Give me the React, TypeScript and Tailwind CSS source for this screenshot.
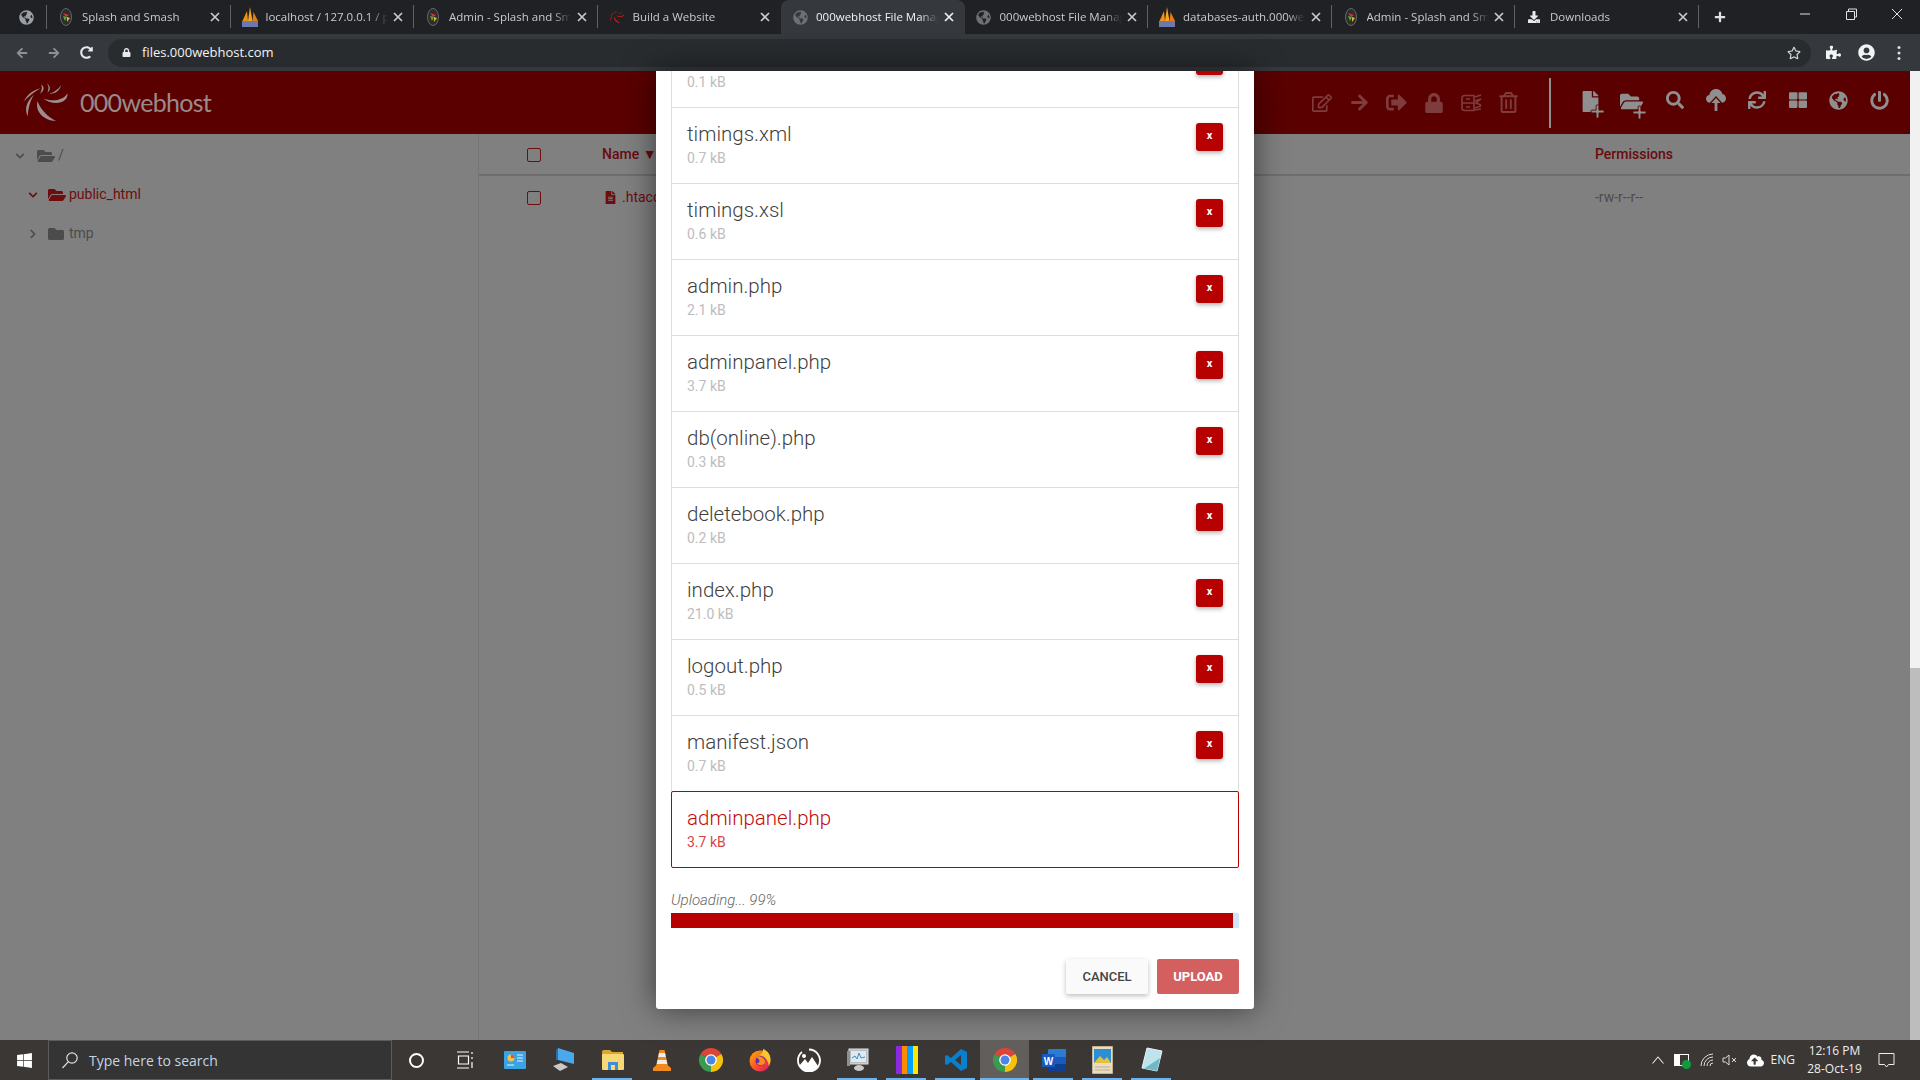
import React from "react";
import {
  FaRegEdit, FaArrowRight, FaSignOutAlt, FaLock, FaRegTrashAlt, FaSearch, FaCloudUploadAlt, FaSync, FaThLarge,
  FaGlobeAmericas, FaPowerOff, FaChevronDown, FaChevronRight, FaFolderOpen, FaFolder, FaFile, FaFileAlt, FaPlus,
  FaPuzzlePiece, FaUserCircle, FaRegStar, FaLock as FaLockSmall, FaArrowLeft, FaRedoAlt, FaDownload, FaWindows,
} from "react-icons/fa";

function Chrome({ s = 24 }: { s?: number }) {
  return (
    <svg width={s} height={s} viewBox="0 0 24 24">
      <path d="M12 12 L1.6 6 A12 12 0 0 1 22.4 6 Z" fill="#db4437" />
      <path d="M12 12 L22.4 6 A12 12 0 0 1 12 24 Z" fill="#f4c20d" />
      <path d="M12 12 L12 24 A12 12 0 0 1 1.6 6 Z" fill="#3c9a4e" />
      <circle cx="12" cy="12" r="5.8" fill="#fff" />
      <circle cx="12" cy="12" r="4.5" fill="#4a86e8" />
    </svg>
  );
}

function Swirl({ w, h, fill }: { w: number; h: number; fill: string }) {
  return (
    <svg width={w} height={h} viewBox="60 35 155 130" fill={fill}>
      <path d="M207 70 C210 100 165 115 128 86 C155 98 192 95 207 70Z" />
      <path d="M110 96 C102 130 130 158 170 160 C142 145 122 125 110 96Z" />
      <path d="M98 75 C74 98 68 120 78 145 C80 120 85 98 98 75Z" />
      <path d="M66 96 C76 75 98 58 120 54 C100 66 84 78 66 96Z" />
      <path d="M122 42 C134 50 132 62 118 72 C124 60 126 52 122 42Z" />
      <path d="M140 38 C154 48 152 62 142 68 C146 58 148 48 140 38Z" />
      <path d="M186 44 C182 62 166 72 148 72 C164 66 176 58 186 44Z" />
    </svg>
  );
}

function SplashIcon() {
  return (
    <svg width="12" height="18" viewBox="0 0 12 18">
      <ellipse cx="6" cy="9" rx="5.5" ry="8.5" fill="#2d2d2d" stroke="#777" strokeWidth="0.8" />
      <path d="M3 5 L9 7 L6 9Z" fill="#d33" />
      <path d="M3 8 L7 9 L5 13Z" fill="#5a3" />
      <path d="M7 9 L10 10 L7 14Z" fill="#db3" />
    </svg>
  );
}

function PmaIcon() {
  return (
    <svg width="18" height="20" viewBox="0 0 18 20" className="shrink-0">
      <path d="M1.5 14 L6 4 L7 14Z" fill="#f29111" />
      <path d="M7 14 L9 0 L11.5 14Z" fill="#f6a623" />
      <path d="M11.5 14 L12.5 5 L17 14Z" fill="#e77a10" />
      <rect x="1" y="14" width="16" height="6" fill="#6c78af" />
    </svg>
  );
}

function Globe({ c = "#9aa0a6" }: { c?: string }) {
  return <FaGlobeAmericas size={15} color={c} />;
}

const tabs: { t: string; i: React.ReactNode; active?: boolean; sep?: boolean }[] = [
  { t: "Splash and Smash", i: <SplashIcon />, sep: true },
  { t: "localhost / 127.0.0.1 / phpMyAdmin", i: <PmaIcon />, sep: true },
  { t: "Admin - Splash and Smash", i: <SplashIcon />, sep: true },
  { t: "Build a Website", i: <Swirl w={16} h={14} fill="#c71a1a" /> },
  { t: "000webhost File Manager", i: <Globe c="#6d7175" />, active: true },
  { t: "000webhost File Manager", i: <Globe c="#6d7175" />, sep: true },
  { t: "databases-auth.000webhost.com", i: <PmaIcon />, sep: true },
  { t: "Admin - Splash and Smash", i: <SplashIcon />, sep: true },
  { t: "Downloads", i: <FaDownload size={12} color="#e8eaed" />, sep: true },
];

function TabStrip() {
  return (
    <div className="h-[34px] bg-[#202124] flex items-stretch font-['Open_Sans'] text-[11.5px] shrink-0">
      <div className="w-[47px] flex items-center justify-end pr-[12px] border-r border-r-[#5f6368] my-[5px]">
        <Globe />
      </div>
      {tabs.map((tab, i) => (
        <div
          key={i}
          className={
            tab.active
              ? "w-[183.5px] flex items-center pl-[11px] pr-[11px] bg-[#35383c] rounded-t-lg text-[#f1f3f4]"
              : "w-[183.5px] flex items-center pl-[11px] pr-[11px] text-[#c8cbce] relative"
          }
        >
          <span className="w-[16px] h-[18px] flex items-center justify-center shrink-0">{tab.i}</span>
          <span className="w-[122px] ml-[8px] overflow-hidden whitespace-nowrap [mask-image:linear-gradient(to_right,black_85%,transparent)]">
            {tab.t}
          </span>
          <svg width="10" height="10" viewBox="0 0 10 10" className="ml-auto shrink-0" stroke={tab.active ? "#f1f3f4" : "#c8cbce"} strokeWidth="1.7">
            <path d="M1 1 L9 9 M9 1 L1 9" />
          </svg>
          {tab.sep && <span className="absolute right-0 top-[5px] h-[23px] w-px bg-[#5f6368]" />}
        </div>
      ))}
      <div className="ml-[15px] flex items-center">
        <FaPlus size={12} color="#dfe1e5" />
      </div>
      <div className="ml-auto flex items-start pt-[8px] text-[#e8eaed]">
        <svg width="46" height="12" viewBox="0 0 46 12" stroke="#dfe1e5" fill="none"><path d="M18 6 H28" /></svg>
        <svg width="46" height="12" viewBox="0 0 46 12" stroke="#dfe1e5" fill="none"><path d="M18.5 3.5 H26.5 V11.5 H18.5Z M20.5 3.5 V1 H28.5 V9 H26.5" /></svg>
        <svg width="46" height="12" viewBox="0 0 46 12" stroke="#dfe1e5" fill="none"><path d="M18 1 L28 11 M28 1 L18 11" /></svg>
      </div>
    </div>
  );
}

function Toolbar() {
  return (
    <div className="h-[37px] bg-[#35383c] flex items-center shrink-0">
      <div className="w-[108px] flex items-center pl-[16px] gap-[20px]">
        <FaArrowLeft size={12} color="#8d9195" />
        <FaArrowRight size={12} color="#8d9195" />
        <FaRedoAlt size={13} color="#e8eaed" />
      </div>
      <div className="h-[28px] w-[1703px] rounded-full bg-[#292c2f] flex items-center pl-[14px] pr-[10px]">
        <FaLockSmall size={9} color="#e8eaed" />
        <span className="ml-[11px] font-['Open_Sans'] text-[13px] text-[#f1f3f4]">files.000webhost.com</span>
        <FaRegStar size={14} color="#d5d7da" className="ml-auto" />
      </div>
      <div className="flex items-center ml-[15px] gap-[17px]">
        <FaPuzzlePiece size={15} color="#f1f3f4" />
        <FaUserCircle size={17} color="#f1f3f4" />
        <svg width="4" height="16" viewBox="0 0 4 16" fill="#dfe1e5" className="ml-[5px]">
          <circle cx="2" cy="2.5" r="1.5" /><circle cx="2" cy="8" r="1.5" /><circle cx="2" cy="13.5" r="1.5" />
        </svg>
      </div>
    </div>
  );
}

function Plus({ children }: { children: React.ReactNode }) {
  return (
    <span className="relative block">
      {children}
      <FaPlus size={15} color="#8f8f8f" className="absolute -right-[4px] -bottom-[7px] stroke-[#5a0000] stroke-[30px]" />
    </span>
  );
}

function ArchiveIcon() {
  return (
    <svg width="21" height="18" viewBox="0 0 21 18" fill="none" stroke="#7f3c3c" strokeWidth="1.6">
      <path d="M4 1.5 H13 L13 16.5 H4 C2 16.5 1 15.5 1 14 V4 C1 2.5 2 1.5 4 1.5Z" />
      <path d="M1 9 H13 M5 5 H9 M5 13 H9" />
      <path d="M14 3 L20 1 M14 7 L20 5 L15 9 L20 11 M14 14 L20 12 M14 16 L20 15" />
    </svg>
  );
}

function CloudUp() {
  return (
    <svg width="20" height="24" viewBox="0 0 20 24">
      <path d="M4.5 15 C1.5 15 0 13 0 10.8 C0 8.6 1.6 7.2 3.4 7 C3.8 3.4 6.6 1 10 1 C13.4 1 15.8 3.2 16.4 6 C18.6 6.4 20 8.2 20 10.6 C20 13 18.2 15 15.5 15Z" fill="#8f8f8f" />
      <path d="M10 9 L16 15.5 H12 V23.5 H8 V15.5 H4Z" fill="#8f8f8f" stroke="#5a0000" strokeWidth="1.2" />
    </svg>
  );
}

function Header() {
  const dim = "#7f3c3c";
  const lit = "#8f8f8f";
  return (
    <header className="h-[63px] bg-[#5a0000] flex items-center shrink-0">
      <div className="pl-[22px] flex items-center">
        <Swirl w={48} h={41} fill="#9c8e8e" />
        <span className="ml-[10px] font-['Lato'] text-[25px] tracking-[-0.7px] text-[#9a8a8a] leading-none">000webhost</span>
      </div>
      <div className="ml-auto flex items-center pr-[10px]">
        {[
          <FaRegEdit size={20} color={dim} />,
          <FaArrowRight size={19} color={dim} />,
          <FaSignOutAlt size={21} color={dim} />,
          <FaLock size={20} color={dim} />,
          <ArchiveIcon />,
          <FaRegTrashAlt size={21} color={dim} />,
        ].map((ic, i) => (
          <span key={i} className="w-[37.2px] flex justify-center">{ic}</span>
        ))}
        <span className="w-[2px] h-[50px] bg-[#8f8f8f] ml-[22px] mr-[21px]" />
        <span className="w-[41px] flex justify-center -mt-[3px] pr-[5px]"><Plus><FaFile size={21} color={lit} /></Plus></span>
        <span className="w-[41px] flex justify-center -mt-[3px] pr-[4px]"><Plus><FaFolderOpen size={23} color={lit} /></Plus></span>
        {[
          <FaSearch size={18} color={lit} />,
          <CloudUp />,
          <FaSync size={18} color={lit} />,
          <FaThLarge size={18} color={lit} />,
          <FaGlobeAmericas size={19} color={lit} />,
          <FaPowerOff size={19} color={lit} />,
        ].map((ic, i) => (
          <span key={i} className="w-[41px] flex justify-center -mt-[5px]">{ic}</span>
        ))}
      </div>
    </header>
  );
}

function Sidebar() {
  return (
    <aside className="w-[479px] border-r border-r-[#767676] pt-[2px] font-[Roboto] text-[14px] shrink-0">
      <div className="h-[39px] flex items-center pl-[15px] text-[#4c4c4c]">
        <FaChevronDown size={10} />
        <FaFolderOpen size={18} className="ml-[12px]" />
        <span className="ml-[3px]">/</span>
      </div>
      <div className="h-[39px] flex items-center pl-[28px] text-[#6f0d0d]">
        <FaChevronDown size={10} />
        <FaFolderOpen size={18} className="ml-[10px]" />
        <span className="ml-[3px]">public_html</span>
      </div>
      <div className="h-[39px] flex items-center pl-[28px] text-[#4c4c4c]">
        <FaChevronRight size={10} />
        <FaFolder size={16} className="ml-[10px]" />
        <span className="ml-[5px]">tmp</span>
      </div>
    </aside>
  );
}

function Check() {
  return <span className="block w-[14px] h-[14px] border border-[#6f0d0d] rounded-[2px]" />;
}

function Table() {
  return (
    <div className="flex-1 font-[Roboto] text-[14px]">
      <div className="h-[42px] border-b-2 border-b-[#6e6e6e] flex items-center text-[#670c0c] font-medium">
        <span className="w-[123px] pl-[48px] pt-[2px]"><Check /></span>
        <span>Name ▼</span>
        <span className="ml-auto w-[315px]">Permissions</span>
      </div>
      <div className="h-[42px] flex items-center text-[#6f0d0d]">
        <span className="w-[125px] pl-[48px] pt-[2px]"><Check /></span>
        <FaFileAlt size={13} />
        <span className="ml-[5px]">.htaccess</span>
        <span className="ml-auto w-[315px] text-[#4c4c4c] text-[14px]">-rw-r--r--</span>
      </div>
    </div>
  );
}

const files = [
  ["test.php", "0.1 kB"],
  ["timings.xml", "0.7 kB"],
  ["timings.xsl", "0.6 kB"],
  ["admin.php", "2.1 kB"],
  ["adminpanel.php", "3.7 kB"],
  ["db(online).php", "0.3 kB"],
  ["deletebook.php", "0.2 kB"],
  ["index.php", "21.0 kB"],
  ["logout.php", "0.5 kB"],
  ["manifest.json", "0.7 kB"],
];

function Modal() {
  return (
    <div className="absolute inset-0 flex justify-center items-start pointer-events-none">
      <div className="w-[598px] h-[938px] bg-white rounded-b-[3px] shadow-[0_0_32px_rgba(0,0,0,0.55)] flex flex-col justify-end overflow-hidden px-[15px] pb-[15px] font-[Roboto]">
        {files.map(([n, s]) => (
          <div key={n + s} className="h-[77px] shrink-0 -mt-px border border-[#dedede] flex justify-between pl-[15px] pr-[15px] pt-[15px]">
            <div className="-mt-px">
              <div className="text-[20.5px] leading-[24px] font-light text-[#3f3f3f]">{n}</div>
              <div className="text-[14px] leading-[18px] mt-[3px] text-[#bdbdbd]">{s}</div>
            </div>
            <span className="w-[27px] h-[28px] bg-[#b70000] rounded-[3px] shadow-[0_2px_4px_rgba(0,0,0,0.3)] text-white text-[11px] font-bold flex items-center justify-center pb-[2px]">x</span>
          </div>
        ))}
        <div className="h-[77px] shrink-0 -mt-px border border-[#b70000] rounded-[2px] pl-[15px] pt-[14px] z-10 bg-white">
          <div className="text-[20.5px] leading-[24px] font-light text-[#c00d0d]">adminpanel.php</div>
          <div className="text-[14px] leading-[18px] mt-[3px] text-[#d8434a]">3.7 kB</div>
        </div>
        <div className="mt-[22px] h-[20px] text-[15px] italic leading-[20px] text-[#666] font-light">Uploading... 99%</div>
        <div className="mt-[3px] h-[15px] bg-[#cfe5f8] shrink-0">
          <div className="h-full w-[99%] bg-[#b70000]" />
        </div>
        <div className="mt-[31px] flex justify-end gap-[9px] text-[13px] font-medium">
          <span className="w-[82px] h-[35px] rounded-[2px] bg-[#fafafa] text-[#444] shadow-[0_2px_5px_rgba(0,0,0,0.26)] flex items-center justify-center">CANCEL</span>
          <span className="w-[82px] h-[35px] rounded-[2px] bg-[#d35f5f] text-white font-bold flex items-center justify-center">UPLOAD</span>
        </div>
      </div>
    </div>
  );
}

function Scrollbar() {
  return (
    <div className="w-[10px] bg-[#bdbdbd] shrink-0">
      <div className="h-[597px] bg-[#f1f1f1]" />
    </div>
  );
}

function TaskBtn({ u, a, children }: { u?: boolean; a?: boolean; children: React.ReactNode }) {
  return (
    <span className={a ? "relative w-[49px] h-full flex items-center justify-center bg-[#625e5b]" : "relative w-[49px] h-full flex items-center justify-center"}>
      {children}
      {u && <span className={a ? "absolute bottom-0 left-0 right-0 h-[2px] bg-[#6cb4ee]" : "absolute bottom-0 left-[4px] right-[5px] h-[2px] bg-[#6cb4ee]"} />}
    </span>
  );
}

function Taskbar() {
  return (
    <div className="h-[40px] bg-[#3a3735] flex items-stretch shrink-0 font-['Open_Sans']">
      <span className="w-[48px] flex items-center justify-center"><FaWindows size={17} color="#fff" /></span>
      <div className="w-[344px] bg-[#343434] border border-[#5c5c5c] flex items-center pl-[12px]">
        <svg width="18" height="18" viewBox="0 0 18 18" fill="none" stroke="#e0e0e0" strokeWidth="1.2"><circle cx="11" cy="7" r="5.2" /><path d="M7.2 10.8 L1.5 17" /></svg>
        <span className="ml-[10px] text-[14px] text-[#c5d4e3]">Type here to search</span>
      </div>
      <TaskBtn><span className="block w-[15px] h-[15px] rounded-full border-2 border-white" /></TaskBtn>
      <TaskBtn>
        <svg width="18" height="18" viewBox="0 0 18 18" fill="none" stroke="#fff" strokeWidth="1.2" className="-ml-[2px]"><path d="M1 1 H13 M1 17 H13 M2.5 5 H12.5 V13 H2.5Z M16 1 V3 M16 6 V8 M16 11 V17" /></svg>
      </TaskBtn>
      <TaskBtn>
        <svg width="22" height="18" viewBox="0 0 22 18"><rect width="22" height="18" rx="1" fill="#3aa3e3" /><circle cx="7" cy="7" r="3.5" fill="#f5c04a" /><path d="M7 7 V3.5 A3.5 3.5 0 0 1 10.5 7Z" fill="#e2562b" /><path d="M13 4 H19 M13 7 H19 M13 10 H19 M3 14 H10" stroke="#e6f5ff" strokeWidth="1.2" /></svg>
      </TaskBtn>
      <TaskBtn>
        <svg width="24" height="26" viewBox="0 0 24 26"><path d="M6 1 L22 6 V17 L6 13Z" fill="#4aa9ea" /><path d="M6 1 L4 3 V13 L6 13Z" fill="#2f6da3" /><path d="M1 19 L9 16 L16 20 L8 24Z" fill="#c9c9c9" /></svg>
      </TaskBtn>
      <TaskBtn u>
        <svg width="22" height="20" viewBox="0 0 22 20"><path d="M0 2 Q0 0 2 0 H8 L10 2 H21 V5 H0Z" fill="#d9a62e" /><rect y="4" width="22" height="16" rx="1" fill="#f8d775" /><path d="M6 20 V12 H16 V20 H13 V15 H9 V20Z" fill="#3c8fd6" /></svg>
      </TaskBtn>
      <TaskBtn>
        <svg width="20" height="23" viewBox="0 0 20 23"><path d="M7.5 1 H12.5 L16 17 H4Z" fill="#f48a1f" /><path d="M7 4 H13 L13.8 8 H6.2Z" fill="#eee" /><path d="M5.6 11 H14.4 L15.2 15 H4.8Z" fill="#eee" /><path d="M1 19 L4 16.5 H16 L19 19 V22 H1Z" fill="#f08a1c" /></svg>
      </TaskBtn>
      <TaskBtn><Chrome /></TaskBtn>
      <TaskBtn>
        <svg width="24" height="24" viewBox="0 0 24 24"><defs><linearGradient id="ff" x1="0" y1="0" x2="1" y2="1"><stop offset="0" stopColor="#ffb000" /><stop offset="0.55" stopColor="#ff4f2a" /><stop offset="1" stopColor="#c5127e" /></linearGradient></defs><circle cx="12" cy="13" r="10.5" fill="url(#ff)" /><circle cx="12.5" cy="13" r="5" fill="#5a2bb5" /><path d="M15 1 C23 4 24 12 21 18 C20 12 17 8 11 7 C14 6 15 4 15 1Z" fill="#ffc42e" /><path d="M8 9 C12 7 18 10 17 15 C15 18 10 18 9 15 C12 15 13 12 8 9Z" fill="#ff8a1e" /></svg>
      </TaskBtn>
      <TaskBtn>
        <svg width="24" height="24" viewBox="0 0 24 24" fill="#fff"><path d="M12 1.5 A11 11 0 1 1 5 4" fill="none" stroke="#fff" strokeWidth="1.8" /><path d="M2 18 L8 11 L11 15 L15 9 L21 18 A11 11 0 0 1 2 18Z" /><circle cx="7" cy="8" r="2" /></svg>
      </TaskBtn>
      <TaskBtn u>
        <svg width="24" height="26" viewBox="0 0 24 26"><rect x="3" y="2" width="19" height="15" fill="#b7bcbf" stroke="#e3e5e6" /><rect x="5" y="4" width="15" height="11" fill="#dfe9ee" /><path d="M6 11 L9 9 L11 12 L13 6 L15 11 L19 10" stroke="#3d8fd1" fill="none" /><rect x="1" y="4" width="3" height="15" fill="#8c9093" /><ellipse cx="13" cy="21" rx="5" ry="3" fill="#c9c9c9" /></svg>
      </TaskBtn>
      <TaskBtn u>
        <svg width="22" height="28" viewBox="0 0 22 28"><rect width="6" height="28" fill="#8a2be2" /><rect x="6" width="5" height="28" fill="#ff8c00" /><rect x="11" width="6" height="28" fill="#00a2ff" /><rect x="17" width="5" height="28" fill="#ffe600" /></svg>
      </TaskBtn>
      <TaskBtn u>
        <svg width="24" height="24" viewBox="0 0 24 24"><path d="M17 1 L23 4 V20 L17 23 L7 14 L3 17 L1 16 V8 L3 7 L7 10Z M17 7 L11 12 L17 17Z" fill="#0a7fcc" fillRule="evenodd" /></svg>
      </TaskBtn>
      <TaskBtn u a><Chrome /></TaskBtn>
      <TaskBtn u>
        <svg width="24" height="24" viewBox="0 0 24 24"><rect x="6" y="1" width="18" height="22" rx="1" fill="#2b7cd3" /><rect x="6" y="16" width="18" height="7" fill="#103f91" /><rect x="6" y="9" width="18" height="7" fill="#185abd" /><rect y="6" width="13" height="13" rx="1" fill="#185abd" /><text x="6.5" y="16.5" fontSize="10" fontWeight="bold" fill="#fff" textAnchor="middle" fontFamily="Liberation Sans">W</text></svg>
      </TaskBtn>
      <TaskBtn u>
        <svg width="21" height="28" viewBox="0 0 21 28"><rect width="21" height="28" fill="#e9dcc2" stroke="#9a8a6a" /><rect x="2" y="3" width="17" height="14" fill="#2a8fd4" /><path d="M2 17 L8 10 L12 14 L15 11 L19 17Z" fill="#e5c040" /><path d="M3 21 H18 M3 24 H18" stroke="#bfae8e" /></svg>
      </TaskBtn>
      <TaskBtn u>
        <svg width="22" height="26" viewBox="0 0 22 26"><path d="M6 1 L21 4 L16 24 L1 21Z" fill="#bfe3ea" stroke="#e8f4f6" /><path d="M4 21 L19 11 L16 24 L1 21Z" fill="#6fb8c6" /></svg>
      </TaskBtn>
      <div className="ml-auto flex items-center text-white">
        <svg width="12" height="8" viewBox="0 0 12 8" fill="none" stroke="#e8e8e8" strokeWidth="1.1" className="mr-[10.5px]"><path d="M0.5 7.5 L6 1 L11.5 7.5" /></svg>
        <span className="relative mr-[10.5px] w-[15px] h-[12px] bg-white border border-white">
          <span className="absolute right-0 top-0 bottom-0 w-[8px] bg-[#3a3735]" />
          <span className="absolute -right-[3px] -bottom-[4px] w-[9px] h-[9px] rounded-full bg-[#0f9d3a]" />
        </span>
        <svg width="14" height="14" viewBox="0 0 14 14" fill="none" stroke="#ddd" strokeWidth="1" className="mr-[8px]"><path d="M1 13 A12 12 0 0 1 13 1 M4 13 A9 9 0 0 1 13 4 M7 13 A6 6 0 0 1 13 7 M10 13 A3 3 0 0 1 13 10" /></svg>
        <svg width="15" height="14" viewBox="0 0 15 14" fill="none" stroke="#ddd" strokeWidth="1" className="mr-[10px]"><path d="M1 5 H3.5 L7 2 V12 L3.5 9 H1Z M10 5 L14 9 M14 5 L10 9" /></svg>
        <FaCloudUploadAlt size={17} color="#fff" className="mr-[7px]" />
        <span className="text-[12px] text-[#eee] mr-[7.5px]">ENG</span>
        <div className="w-[64px] text-center text-[12px] leading-[18px] text-[#eee]">
          <div>12:16 PM</div>
          <div>28-Oct-19</div>
        </div>
        <svg width="17" height="17" viewBox="0 0 17 17" fill="none" stroke="#eee" className="ml-[11.5px] mr-[25px]"><path d="M1 1.5 H16 V12.5 H10.5 L8.5 15 L6.5 12.5 H1Z" /></svg>
      </div>
    </div>
  );
}

export default function App() {
  return (
    <div className="w-screen h-screen overflow-hidden flex flex-col bg-[#808080]">
      <TabStrip />
      <Toolbar />
      <div className="flex-1 flex min-h-0">
        <div className="flex-1 relative flex flex-col min-w-0">
          <Header />
          <div className="flex-1 flex min-h-0">
            <Sidebar />
            <Table />
          </div>
          <Modal />
        </div>
        <Scrollbar />
      </div>
      <Taskbar />
    </div>
  );
}
